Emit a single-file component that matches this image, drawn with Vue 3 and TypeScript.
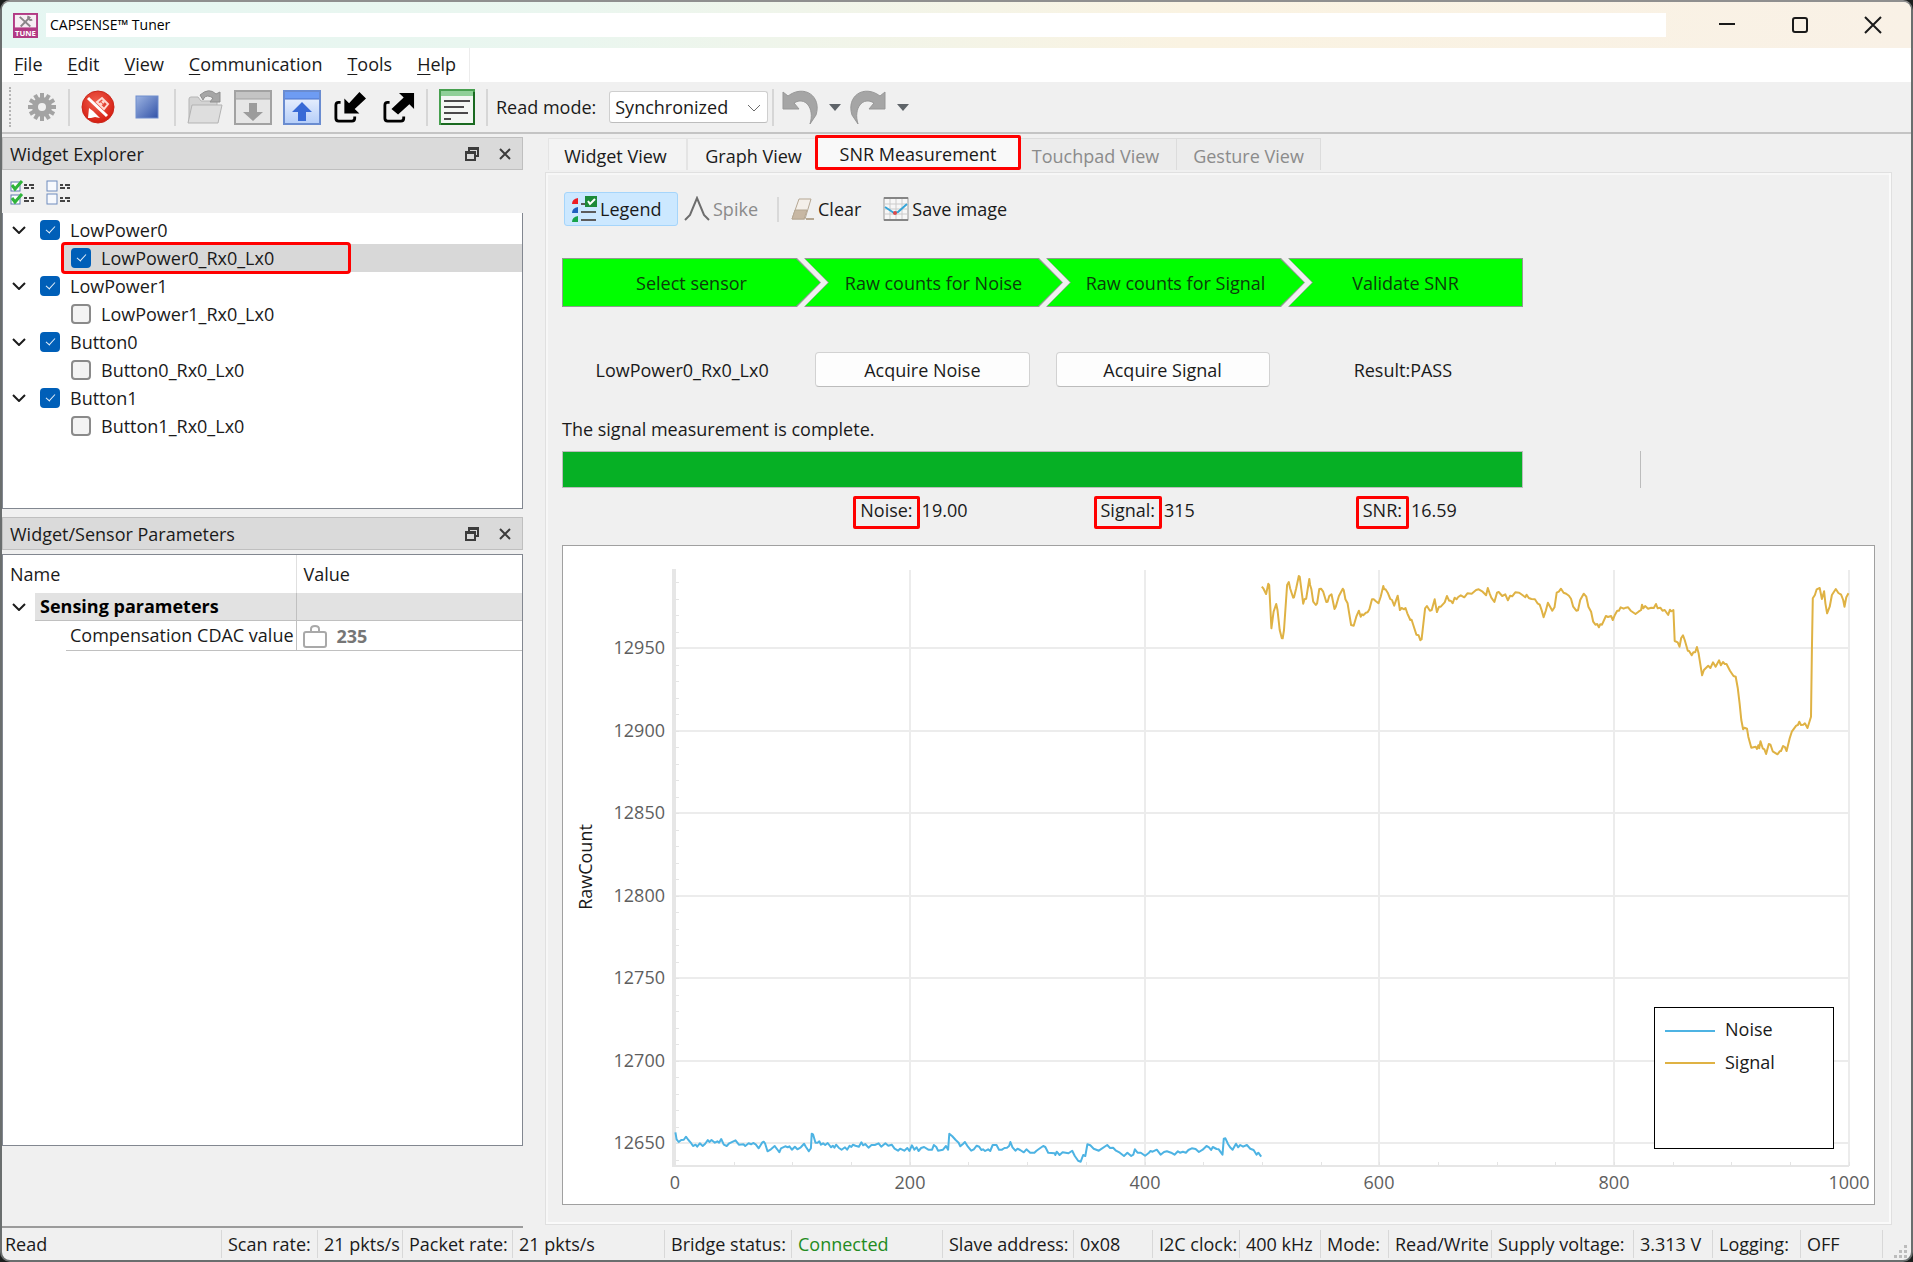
<script setup lang="ts">
import { ref } from 'vue'

interface Sensor { name: string; checked: boolean; selected?: boolean }
interface Widget { name: string; checked: boolean; sensors: Sensor[] }

const widgets = ref<Widget[]>([
  { name: 'LowPower0', checked: true, sensors: [{ name: 'LowPower0_Rx0_Lx0', checked: true, selected: true }] },
  { name: 'LowPower1', checked: true, sensors: [{ name: 'LowPower1_Rx0_Lx0', checked: false }] },
  { name: 'Button0', checked: true, sensors: [{ name: 'Button0_Rx0_Lx0', checked: false }] },
  { name: 'Button1', checked: true, sensors: [{ name: 'Button1_Rx0_Lx0', checked: false }] },
])

const menus = ['File', 'Edit', 'View', 'Communication', 'Tools', 'Help']
const steps = ['Select sensor', 'Raw counts for Noise', 'Raw counts for Signal', 'Validate SNR']
const readMode = ref('Synchronized')

const status: { text: string; width: number; ok?: boolean }[] = [
  { text: 'Read', width: 219 },
  { text: 'Scan rate:', width: 96 },
  { text: '21 pkts/s', width: 85 },
  { text: 'Packet rate:', width: 110 },
  { text: '21 pkts/s', width: 152 },
  { text: 'Bridge status:', width: 127 },
  { text: 'Connected', width: 151, ok: true },
  { text: 'Slave address:', width: 131 },
  { text: '0x08', width: 79 },
  { text: 'I2C clock:', width: 87 },
  { text: '400 kHz', width: 81 },
  { text: 'Mode:', width: 68 },
  { text: 'Read/Write', width: 103 },
  { text: 'Supply voltage:', width: 142 },
  { text: '3.313 V', width: 79 },
  { text: 'Logging:', width: 88 },
  { text: 'OFF', width: 82 },
]

// Plot geometry, in units of the chart's viewBox.
const plot = { left: 112, right: 1286, top: 24, bottom: 620, y0: 597, yStep: 82.5, xStep: 234.75 }
const yTicks = [12650, 12700, 12750, 12800, 12850, 12900, 12950].map((value, i) => ({
  value, y: Math.round(plot.y0 - i * plot.yStep),
}))
const xTicks = [0, 200, 400, 600, 800, 1000].map((value, i) => ({
  value, x: Math.round(plot.left + i * plot.xStep),
}))
const yMinor = Array.from({ length: 36 }, (_, i) => Math.round(plot.y0 + 16.5 - i * 16.5)).filter((y) => y > plot.top)
const xMinor = Array.from({ length: 20 }, (_, i) => Math.round(plot.left + (i + 1) * 58.69))

const trace = (points: string, x: number, y: number, sx: number, sy: number) =>
  points.split(' ').map((p) => {
    const [u, v] = p.split(',').map(Number)
    return `${(x + u / sx).toFixed(1)},${(y + v / sy).toFixed(1)}`
  }).join(' ')

const noise = trace('84,97 87,118 92,126 98,120 104,119 109,110 115,120 120,127 126,138 132,134 136,140 142,130 149,138 155,131 161,120 165,126 170,120 178,128 184,124 188,128 193,117 199,134 206,138 212,130 227,121 235,134 246,133 250,138 258,130 264,133 269,129 275,133 282,145 290,128 294,125 297,130 303,154 311,148 320,138 326,148 331,157 335,145 345,139 351,142 355,139 361,149 368,140 374,148 382,142 390,131 394,140 401,154 406,145 408,101 411,103 417,128 422,128 426,124 430,134 435,130 440,135 446,129 454,142 458,137 462,143 466,134 472,143 479,149 487,142 492,149 498,137 502,141 506,134 512,137 520,140 526,127 530,136 535,132 543,143 550,135 558,135 567,130 573,140 583,130 590,137 598,134 605,146 613,152 618,146 628,152 635,144 640,153 646,136 652,149 657,142 662,153 668,144 675,141 685,149 694,149 698,135 704,141 708,152 720,149 727,138 732,149 735,101 742,109 750,120 757,128 761,139 768,131 772,126 779,140 787,152 793,148 800,137 806,140 811,150 815,148 820,153 827,148 832,153 838,135 847,135 853,149 860,149 866,144 872,143 877,138 880,126 885,142 892,152 897,146 903,150 912,157 918,148 927,158 937,158 942,152 951,144 958,138 963,141 970,158 985,160 987,165 990,155 997,165 1004,157 1018,160 1027,152 1033,168 1041,182 1047,185 1053,165 1058,168 1063,133 1070,136 1078,146 1090,152 1110,135 1117,144 1124,143 1131,152 1140,158 1150,168 1158,158 1167,168 1172,164 1176,148 1182,158 1190,158 1200,167 1208,160 1213,153 1218,155 1228,149 1237,164 1245,156 1252,154 1262,158 1270,164 1278,154 1283,158 1290,155 1297,158 1303,150 1311,145 1320,147 1328,156 1337,149 1346,138 1352,142 1357,150 1361,141 1370,147 1375,148 1384,164 1387,116 1391,115 1397,132 1402,142 1408,149 1416,131 1421,142 1426,135 1433,140 1442,135 1450,146 1458,150 1465,164 1469,158 1476,170', 77, 554, 2.376, 3)
const signal = trace('73,110 77,116 83,132 88,101 90,105 95,235 100,185 106,162 109,180 114,240 119,265 121,265 124,240 131,105 135,96 138,115 145,143 147,142 152,115 158,78 160,80 166,140 168,161 171,148 175,146 182,87 184,105 187,118 191,155 197,165 200,160 205,117 209,116 214,125 221,156 224,155 228,138 233,133 240,177 243,170 250,138 259,116 261,120 265,148 270,160 273,185 278,225 284,227 290,200 296,182 300,200 303,193 306,196 312,188 316,187 320,178 326,148 330,148 335,154 341,160 346,140 352,108 354,118 357,118 362,128 368,147 372,150 377,167 385,137 390,180 394,174 400,178 403,174 407,190 414,210 417,209 428,254 433,256 437,271 440,268 444,220 448,175 452,168 459,182 463,180 470,148 475,186 480,170 484,170 493,157 498,138 503,152 507,152 511,160 516,143 520,148 524,141 530,136 538,142 545,130 555,131 565,120 571,118 580,125 588,136 592,114 596,130 600,143 607,156 613,128 617,126 625,138 632,133 638,151 643,137 648,139 655,127 664,128 672,136 678,142 681,134 686,144 692,147 700,148 706,160 711,164 716,182 720,202 725,182 730,158 735,170 740,182 745,172 750,128 755,125 760,116 766,128 772,131 778,137 783,146 788,170 795,182 799,181 804,150 812,131 818,140 823,170 829,185 834,215 839,224 843,222 847,232 850,223 854,224 863,198 868,201 875,198 879,210 884,194 889,182 893,182 897,172 904,176 909,173 914,172 920,182 931,192 938,185 944,180 946,164 949,175 953,168 960,176 967,173 973,174 978,162 982,175 988,173 993,182 998,180 1006,195 1010,179 1013,184 1018,180 1021,273 1028,277 1032,290 1036,264 1040,256 1044,270 1051,302 1054,303 1060,316 1064,307 1068,307 1072,291 1076,310 1084,376 1088,360 1098,347 1103,354 1109,337 1115,350 1123,331 1127,346 1132,336 1136,342 1140,342 1148,362 1156,378 1161,380 1166,415 1170,460 1174,510 1178,538 1181,533 1187,536 1190,560 1197,593 1207,590 1210,597 1213,586 1215,595 1218,574 1223,595 1227,598 1231,612 1237,582 1241,584 1246,604 1257,613 1262,604 1265,603 1270,588 1274,591 1278,603 1285,565 1290,545 1300,527 1304,525 1307,515 1311,525 1316,524 1320,520 1326,534 1334,500 1336,300 1338,145 1343,135 1347,118 1354,114 1359,147 1364,124 1367,160 1371,190 1377,170 1382,135 1391,117 1397,129 1403,134 1408,150 1411,170 1415,142 1420,130', 667, 4, 2.296, 3)

const gearTeeth = Array.from({ length: 12 }, (_, i) => i * 30)
</script>

<template>
  <div class="window">
    <header class="titlebar">
      <svg class="app-icon" viewBox="0 0 26 26" aria-hidden="true">
        <rect x="1" y="1" width="24" height="24" fill="#f7eef4" stroke="#b23a84" stroke-width="2" />
        <path d="M7 4l11 10M18 4L8 14" stroke="#8b8589" stroke-width="2" fill="none" />
        <path d="M16 3a3 3 0 0 0 4 4" stroke="#8b8589" stroke-width="2" fill="none" />
        <rect x="1" y="15" width="24" height="10" fill="#b23a84" />
        <text x="13" y="24" text-anchor="middle" class="app-icon-text">TUNE</text>
      </svg>
      <h1 class="caption">CAPSENSE™ Tuner</h1>
      <div class="window-controls">
        <button type="button" aria-label="Minimize"><svg viewBox="0 0 18 18"><path d="M1 8h16" /></svg></button>
        <button type="button" aria-label="Maximize"><svg viewBox="0 0 18 18"><rect x="2" y="2" width="14" height="14" rx="2" /></svg></button>
        <button type="button" aria-label="Close"><svg viewBox="0 0 18 18"><path d="M1 1l16 16M17 1L1 17" /></svg></button>
      </div>
    </header>

    <nav class="menubar">
      <button v-for="m in menus" :key="m" type="button"><u>{{ m[0] }}</u>{{ m.slice(1) }}</button>
      <span class="menu-end"></span>
    </nav>

    <div class="toolbar">
      <span class="handle"></span>
      <button type="button" class="tool gear" aria-label="Settings" disabled>
        <svg width="30" height="30" viewBox="-15 -15 30 30">
          <g fill="#a3a3a3">
            <rect v-for="a in gearTeeth" :key="a" x="-2" y="-14" width="4" height="6" :transform="`rotate(${a})`" />
            <path fill-rule="evenodd" d="M0-10a10 10 0 1 0 0 20a10 10 0 1 0 0-20zM0-4a4 4 0 1 1 0 8a4 4 0 1 1 0-8z" />
          </g>
        </svg>
      </button>
      <span class="sep"></span>
      <button type="button" class="tool disconnect" aria-label="Disconnect">
        <svg width="34" height="34" viewBox="0 0 34 34">
          <defs><radialGradient id="red" cx=".45" cy=".35" r=".7"><stop offset="0" stop-color="#f0604f" /><stop offset="1" stop-color="#d3170b" /></radialGradient></defs>
          <circle cx="17" cy="17" r="16" fill="url(#red)" stroke="#c9281c" />
          <path d="M7 28l1-10 4 3 7 7-5-1-4 1z" fill="#fff" />
          <path d="M16 12l5-4 6 6-4 5zM21 11l2 2M19 13l2 2" fill="none" stroke="#ffd9d2" stroke-width="2" />
          <path d="M7 8l19 18" stroke="#fff" stroke-width="3" />
        </svg>
      </button>
      <button type="button" class="tool stop" aria-label="Stop">
        <svg width="24" height="24" viewBox="0 0 24 24">
          <defs><linearGradient id="blue" x1="0" y1="0" x2="1" y2="1"><stop offset="0" stop-color="#9db4e2" /><stop offset="1" stop-color="#3253a8" /></linearGradient></defs>
          <rect x="1" y="1" width="22" height="22" fill="url(#blue)" stroke="#6f8dcd" />
        </svg>
      </button>
      <span class="sep"></span>
      <button type="button" class="tool open" aria-label="Open" disabled>
        <svg width="36" height="36" viewBox="0 0 36 36">
          <path d="M2 33V10q0-2 2-2h7l3 4h16v5" fill="#d3d3d3" stroke="#b5b5b5" />
          <path d="M1 34L5 16h30l-4 18z" fill="#dedede" stroke="#b3b3b3" />
          <path d="M13 6q9-8 16-1l4-2v10H23l3-4q-6-4-9 0l-1 2z" fill="#a6a6a6" stroke="#8f8f8f" />
        </svg>
      </button>
      <button type="button" class="tool window-tool" aria-label="Read from device" disabled>
        <svg width="38" height="35" viewBox="0 0 38 35">
          <rect x="1" y="1" width="36" height="33" fill="#e6e6e6" stroke="#a2a2a2" stroke-width="2" />
          <rect x="2" y="2" width="34" height="7" fill="#c4c4c4" />
          <path d="M2 9h34" stroke="#a2a2a2" />
          <path d="M15 13h8v9h6L19 31 9 22h6z" fill="#9c9c9c" />
        </svg>
      </button>
      <button type="button" class="tool window-tool" aria-label="Write to device">
        <svg width="38" height="35" viewBox="0 0 38 35">
          <defs><linearGradient id="pane" x1="0" y1="0" x2="0" y2="1"><stop offset="0" stop-color="#f4f8ff" /><stop offset="1" stop-color="#b4cdf8" /></linearGradient></defs>
          <rect x="1" y="1" width="36" height="33" fill="url(#pane)" stroke="#6a8cd0" stroke-width="2" />
          <rect x="2" y="2" width="34" height="7" fill="#6e9cf3" />
          <path d="M2 9h34" stroke="#4a73c9" />
          <path d="M15 31h8v-9h6L19 12 9 22h6z" fill="#386ad6" />
        </svg>
      </button>
      <button type="button" class="tool import" aria-label="Import">
        <svg width="32" height="34" viewBox="0 0 34 34">
          <path d="M7 12H5q-3 0-3 3v14q0 3 3 3h14q3 0 3-3v-2" fill="none" stroke="#000" stroke-width="3" />
          <path d="M11 24V8l5 5L27 1l7 7-12 11 5 5z" />
        </svg>
      </button>
      <button type="button" class="tool export" aria-label="Export">
        <svg width="32" height="34" viewBox="0 0 34 34">
          <path d="M7 12H5q-3 0-3 3v14q0 3 3 3h14q3 0 3-3v-2" fill="none" stroke="#000" stroke-width="3" />
          <path d="M33 2v17l-5-5-12 11-7-6 13-12-5-5z" />
        </svg>
      </button>
      <span class="sep"></span>
      <button type="button" class="tool log" aria-label="Log">
        <svg width="36" height="36" viewBox="0 0 36 36">
          <rect x="1" y="1" width="34" height="34" fill="#f3f7f3" stroke="#47a04f" stroke-width="2" />
          <path d="M35 3v32H2" fill="none" stroke="#1a6a20" stroke-width="2" />
          <rect x="2" y="2" width="32" height="5" fill="#8fd097" />
          <path d="M5 12h26M5 18h20M5 24h24M5 30h7" stroke="#4a4a4a" stroke-width="2" />
        </svg>
      </button>
      <span class="sep before-label"></span>
      <label class="read-label" for="read-mode">Read mode:</label>
      <span class="select">
        <select id="read-mode" v-model="readMode"><option>Synchronized</option></select>
        <svg width="14" height="8" viewBox="0 0 14 8" aria-hidden="true"><path d="M1 1l6 6 6-6" fill="none" stroke="#6b6b6b" /></svg>
      </span>
      <span class="sep tight"></span>
      <button type="button" class="tool undo" aria-label="Undo" disabled>
        <svg width="36" height="36" viewBox="0 0 36 36"><path d="M1 3l5 4C22-5 40 7 34 26l-6 9C33 19 23 7 12 14l5 6H1z" fill="#a5a5a5" stroke="#979797" /></svg>
      </button>
      <span class="caret"></span>
      <button type="button" class="tool redo" aria-label="Redo" disabled>
        <svg width="36" height="36" viewBox="0 0 36 36"><path d="M35 3l-5 4C14-5-4 7 2 26l6 9C3 19 13 7 24 14l-5 6h16z" fill="#a5a5a5" stroke="#979797" /></svg>
      </button>
      <span class="caret"></span>
    </div>

    <div class="body">
      <aside class="docks">
        <section class="dock">
          <header class="dock-title">
            <h2>Widget Explorer</h2>
            <button type="button" aria-label="Float"><svg width="14" height="14" viewBox="0 0 14 14"><path d="M4 4V1h9v8h-3M4 2h9" /><path d="M1 5h9v8H1zM1 6h9" /></svg></button>
            <button type="button" aria-label="Close panel"><svg width="12" height="12" viewBox="0 0 12 12"><path d="M1 1l10 10M11 1L1 11" /></svg></button>
          </header>
          <div class="explorer-tools">
            <button type="button" aria-label="Check all">
              <svg width="25" height="25" viewBox="0 0 25 25">
                <g v-for="y in [0, 13]" :key="y" :transform="`translate(0 ${y})`">
                  <rect x="1" y="2" width="9" height="9" fill="#fff" stroke="#5d79ad" />
                  <path d="M2 5l3 4 7-8" fill="none" stroke="#2fb53a" stroke-width="3" />
                  <path d="M14 5h3M19 5h5M14 8h5M21 8h3" stroke="#444" stroke-width="2" />
                </g>
              </svg>
            </button>
            <button type="button" aria-label="Uncheck all">
              <svg width="25" height="25" viewBox="0 0 25 25">
                <g v-for="y in [0, 13]" :key="y" :transform="`translate(0 ${y})`">
                  <rect x="1" y="1" width="10" height="10" fill="#f7f9fd" stroke="#6f8bbd" />
                  <path d="M14 5h3M19 5h5M14 8h5M21 8h3" stroke="#444" stroke-width="2" />
                </g>
              </svg>
            </button>
          </div>
          <ul class="tree">
            <li v-for="w in widgets" :key="w.name">
              <label class="row parent">
                <svg width="14" height="8" viewBox="0 0 14 8" aria-hidden="true"><path d="M1 1l6 6 6-6" fill="none" stroke="#1c1c1c" stroke-width="2" /></svg>
                <input v-model="w.checked" type="checkbox" /><span>{{ w.name }}</span>
              </label>
              <ul>
                <li v-for="s in w.sensors" :key="s.name" :class="{ selected: s.selected }">
                  <label class="row child" :class="{ marked: s.selected }">
                    <input v-model="s.checked" type="checkbox" /><span>{{ s.name }}</span>
                  </label>
                </li>
              </ul>
            </li>
          </ul>
        </section>

        <section class="dock params">
          <header class="dock-title">
            <h2>Widget/Sensor Parameters</h2>
            <button type="button" aria-label="Float"><svg width="14" height="14" viewBox="0 0 14 14"><path d="M4 4V1h9v8h-3M4 2h9" /><path d="M1 5h9v8H1zM1 6h9" /></svg></button>
            <button type="button" aria-label="Close panel"><svg width="12" height="12" viewBox="0 0 12 12"><path d="M1 1l10 10M11 1L1 11" /></svg></button>
          </header>
          <div class="grid-frame">
            <table>
              <thead><tr><th class="name" colspan="3">Name</th><th>Value</th></tr></thead>
              <tbody>
                <tr class="group">
                  <td class="toggle"><svg width="14" height="8" viewBox="0 0 14 8" aria-hidden="true"><path d="M1 1l6 6 6-6" fill="none" stroke="#1c1c1c" stroke-width="2" /></svg></td>
                  <th class="group-name" colspan="2">Sensing parameters</th>
                  <td class="fill"></td>
                </tr>
                <tr class="item">
                  <td class="toggle"></td>
                  <td class="indent"></td>
                  <td class="label">Compensation CDAC value</td>
                  <td class="value">
                    <svg width="24" height="24" viewBox="0 0 24 24" aria-hidden="true"><path d="M8 8V5q0-3 4-3t4 3v3" fill="none" stroke="#a9a9a9" stroke-width="2" /><rect x="1" y="8" width="22" height="15" rx="2" fill="#fff" stroke="#a9a9a9" stroke-width="2" /></svg>
                    <b>235</b>
                  </td>
                </tr>
              </tbody>
            </table>
          </div>
        </section>
      </aside>

      <main class="main">
        <div class="tabs" role="tablist">
          <button type="button" role="tab" class="t1">Widget View</button>
          <button type="button" role="tab" class="t2">Graph View</button>
          <button type="button" role="tab" class="t3" aria-selected="true">SNR Measurement</button>
          <button type="button" role="tab" class="t4" disabled>Touchpad View</button>
          <button type="button" role="tab" class="t5" disabled>Gesture View</button>
        </div>
        <section class="page">
          <div class="page-tools">
            <button type="button" class="legend-btn" aria-pressed="true">
              <svg width="26" height="26" viewBox="0 0 26 26" aria-hidden="true">
                <path d="M1 8q0-5 6-6v6z" fill="#ed1c24" /><path d="M1 17q0-5 6-6v6z" fill="#1f5fbf" /><path d="M1 26q0-5 6-6v6z" fill="#17a34a" />
                <path d="M10 8h4M10 16h15M10 24h15" stroke="#5c5c5c" stroke-width="2" />
                <rect x="14" y="0" width="12" height="11" fill="#1d8a38" /><path d="M17 5l2 3 5-5" fill="none" stroke="#fff" stroke-width="2" />
              </svg>Legend
            </button>
            <button type="button" class="spike-btn" disabled>
              <svg width="26" height="26" viewBox="0 0 26 26" aria-hidden="true"><path d="M1 24l5-5 7-17 7 17 5 5" fill="none" stroke="#6d6d6d" stroke-width="2" /></svg>Spike
            </button>
            <span class="sep small"></span>
            <button type="button" class="clear-btn">
              <svg width="25" height="24" viewBox="0 0 25 24" aria-hidden="true">
                <path d="M9 2h12l-6 20H2z" fill="#f4efe9" stroke="#b5a793" /><path d="M5 13h12l-3 9H2z" fill="#c7b7a3" stroke="#b5a793" /><path d="M16 22h8" stroke="#b5a793" stroke-width="2" />
              </svg>Clear
            </button>
            <button type="button" class="save-btn">
              <svg width="26" height="24" viewBox="0 0 26 24" aria-hidden="true">
                <rect x="1" y="1" width="24" height="22" fill="#f7f7f7" stroke="#9a9a9a" />
                <path d="M7 2v20M13 2v20M19 2v20M2 7h22M2 12h22M2 17h22" stroke="#cbcbcb" />
                <path d="M1 1h24M1 23h24" stroke="#858585" stroke-width="2" />
                <path d="M2 10l9 6 4-1 9-8" fill="none" stroke="#36a5d8" stroke-width="2" /><circle cx="12" cy="16" r="2" fill="#dc4a4a" />
              </svg>Save image
            </button>
          </div>

          <ol class="steps"><li v-for="s in steps" :key="s"><span>{{ s }}</span></li></ol>

          <div class="columns actions">
            <span>LowPower0_Rx0_Lx0</span>
            <button type="button">Acquire Noise</button>
            <button type="button">Acquire Signal</button>
            <span>Result:PASS</span>
          </div>

          <p class="message">The signal measurement is complete.</p>
          <div class="progress-row">
            <div class="progress" role="progressbar" aria-valuenow="100" aria-label="Measurement progress"></div>
            <span class="progress-end"></span>
          </div>

          <div class="columns results">
            <span></span>
            <span><em>Noise:</em>19.00</span>
            <span><em>Signal:</em>315</span>
            <span class="snr"><em>SNR:</em>16.59</span>
          </div>

          <div class="chart">
            <svg viewBox="0 0 1311 658">
              <g class="grid">
                <path v-for="t in xTicks.slice(1)" :key="'x' + t.value" :d="`M${t.x} ${plot.top}V${plot.bottom}`" />
                <path v-for="t in yTicks" :key="'y' + t.value" :d="`M${plot.left} ${t.y}H${plot.right}`" />
              </g>
              <g class="minor">
                <path v-for="y in yMinor" :key="'ym' + y" :d="`M${plot.left} ${y}h4`" />
                <path v-for="x in xMinor" :key="'xm' + x" :d="`M${x} ${plot.bottom}v-4`" />
              </g>
              <path class="axis-y" :d="`M111 ${plot.top - 1}V${plot.bottom}`" />
              <path class="axis-x" :d="`M109 ${plot.bottom}H${plot.right}`" />
              <g class="tick">
                <text v-for="t in yTicks" :key="'yl' + t.value" x="102" :y="t.y + 6" text-anchor="end">{{ t.value }}</text>
                <text v-for="t in xTicks" :key="'xl' + t.value" :x="t.x" y="643" text-anchor="middle">{{ t.value }}</text>
              </g>
              <text class="axis-title" transform="translate(29 321) rotate(-90)" text-anchor="middle">RawCount</text>
              <polyline class="noise" :points="noise" />
              <polyline class="signal" :points="signal" />
              <rect class="legend-box" x="1091" y="461" width="179" height="141" />
              <path class="noise" d="M1102 485h50" />
              <path class="signal" d="M1102 517h50" />
              <text class="legend-text" x="1162" y="490">Noise</text>
              <text class="legend-text" x="1162" y="523">Signal</text>
            </svg>
          </div>
        </section>
      </main>
    </div>

    <footer class="statusbar">
      <span v-for="(s, i) in status" :key="i" :class="{ ok: s.ok }" :style="{ flexBasis: s.width + 'px' }">{{ s.text }}</span>
      <span class="grip"><svg width="13" height="13" viewBox="0 0 13 13" aria-hidden="true"><path d="M10 0h3v3h-3zM5 5h3v3H5zM10 5h3v3h-3zM0 10h3v3H0zM5 10h3v3H5zM10 10h3v3h-3z" fill="#bcbcbc" /></svg></span>
    </footer>
  </div>
</template>

<style>
body { background: #1b1e1d; }
</style>

<style scoped>
* { box-sizing: border-box; }
.window {
  display: flex; flex-direction: column; min-height: 100vh;
  border: 2px solid #6a6e6e; border-top-color: #8f8f8f; border-radius: 10px; overflow: hidden;
  background: #f0f0f0; color: #1a1a1a;
  font: 18px/24px "Open Sans", "Noto Sans", sans-serif;
}
button, select { font: inherit; color: inherit; }
button { padding: 0; border: 0; background: none; }
svg { display: block; flex: none; }
h1, h2, p, ul, ol { margin: 0; padding: 0; list-style: none; font-weight: 400; }

.titlebar { display: flex; align-items: center; height: 46px; padding-left: 11px; background: linear-gradient(90deg, #e5f6f2, #eaf6ef 30%, #faf3e2 62%, #f9f1e6); }
.app-icon { width: 25px; height: 25px; }
.app-icon-text { font-size: 8px; font-weight: 700; fill: #fff; }
.caption { flex: 1; margin-left: 8px; padding-left: 4px; background: #fff; font-size: 14px; font-weight: 400; color: #000; }
.window-controls { display: flex; width: 245px; padding-left: 52px; gap: 55px; }
.window-controls svg { width: 18px; height: 18px; fill: none; stroke: #1a1a1a; stroke-width: 2; }

.menubar { display: flex; gap: 25px; height: 34px; padding-left: 12px; background: #fff; }
.menubar button { padding-bottom: 2px; }
.menubar u { text-underline-offset: 3px; text-decoration-thickness: 1px; }
.menu-end { width: 1px; margin-left: -12px; background: #ececec; }

.toolbar { display: flex; align-items: center; height: 52px; padding-left: 7px; border-bottom: 2px solid #c4c4c4; }
.handle { width: 3px; height: 40px; border-left: 2px dotted #b4b4b4; }
.sep { width: 2px; height: 37px; margin: 0 11px; background: #d6d6d6; }
.sep.before-label { margin-right: 8px; }
.sep.tight { margin: 0 8px 0 4px; }
.gear { margin-left: 15px; }
.stop { margin: 0 4px 0 20px; }
.window-tool { margin-left: 11px; }
.import { margin-left: 13px; }
.export { margin-left: 17px; }
.read-label { margin-right: 13px; }
.select { position: relative; width: 159px; }
.select select { width: 100%; height: 32px; padding: 0 5px; border: 1px solid #cfcfcf; border-bottom-color: #bdbdbd; border-radius: 3px; background: #fff; appearance: none; }
.select svg { position: absolute; right: 7px; top: 13px; pointer-events: none; }
.caret { margin: 0 9px 0 11px; border: 6px solid transparent; border-top: 7px solid #5f6469; border-bottom: 0; }

.body { display: flex; flex: 1; padding-top: 1px; }
.docks { display: flex; flex-direction: column; width: 521px; padding: 2px 0; }
.dock-title { display: flex; align-items: center; height: 33px; padding: 0 11px 0 7px; border: 1px solid #bfbfbf; background: #dadada; }
.dock-title h2 { flex: 1; font-size: 18px; }
.dock-title button { margin-left: 20px; }
.dock-title svg { fill: none; stroke: #3c3c3c; stroke-width: 2; }
.explorer-tools { display: flex; gap: 11px; padding: 10px 8px 8px; }
.tree { height: 296px; padding-top: 3px; border: 1px solid #828790; border-top: 0; background: #fff; }
.tree ul { padding: 0; }
.row { display: flex; align-items: center; height: 28px; }
.parent { padding-left: 9px; }
.parent input { margin: 0 10px 0 14px; }
.child { padding-left: 68px; }
.child input { margin: 0 10px 0 0; }
.selected { background: linear-gradient(90deg, #fff 60px, #d8d8d8 60px); }
.marked { width: 286px; height: 28px; margin-left: 60px; padding-left: 8px; border-radius: 2px; outline: 3px solid #f00; outline-offset: -1px; }
input[type="checkbox"] { position: relative; width: 20px; height: 20px; border: 2px solid #8a8a8a; border-radius: 4px; background: #f3f3f3; appearance: none; }
input[type="checkbox"]:checked { border-color: #005fb8; background: #005fb8; }
input[type="checkbox"]:checked::after { content: ""; position: absolute; left: 6px; top: 2px; width: 4px; height: 8px; border: solid #e6f0fa; border-width: 0 1px 1px 0; transform: rotate(42deg); }

.params { display: flex; flex: 1; flex-direction: column; margin-top: 8px; border-bottom: 2px solid #9b9b9b; }
.grid-frame { flex: 1; margin: 4px 0 80px; border: 1px solid #828790; background: #fff; }
table { width: 100%; border-collapse: collapse; table-layout: auto; }
th, td { padding: 0; text-align: left; font-weight: 400; white-space: nowrap; }
thead th { height: 38px; padding-left: 7px; }
th.name { border-right: 1px solid #e0e0e0; }
.toggle { width: 32px; padding-left: 9px; }
.indent { width: 31px; }
.group th, .group .fill { height: 27px; border-bottom: 1px solid #c0c0c0; background: #e2e2e2; }
.group th { padding-left: 5px; border-right: 1px solid #c0c0c0; font-weight: 700; color: #000; }
.item td { height: 30px; }
.item .label, .item .value { border-bottom: 1px solid #c0c0c0; }
.item .label { width: 230px; padding-left: 4px; border-right: 1px solid #c0c0c0; }
.item .value { padding-left: 6px; color: #767676; }
.value svg, .value b { display: inline-block; vertical-align: middle; }
.value b { margin-left: 10px; }

.main { display: flex; flex: 1; flex-direction: column; min-width: 0; padding: 0 19px 5px 22px; }
.tabs { display: flex; align-items: flex-end; height: 35px; margin-bottom: 2px; padding-left: 3px; }
.tabs button { height: 32px; padding-top: 2px; border: 1px solid #e4e4e4; border-bottom: 0; background: #f3f3f3; text-align: center; }
.tabs button:disabled { background: #ececec; border-color: #dcdcdc; color: #8b8b8b; }
.tabs .t1 { width: 139px; padding-right: 4px; }
.tabs .t2 { width: 128px; padding-left: 4px; border-right: 0; }
.tabs .t3 { width: 206px; height: 35px; border: 3px solid #f00; border-radius: 2px; background: #f9f9f9; }
.tabs .t4 { width: 156px; padding-right: 6px; border-left: 0; }
.tabs .t5 { width: 144px; border-left: 0; }
.page { flex: 1; padding: 19px 16px 16px; border: 1px solid #e0e0e0; box-shadow: inset -2px -2px #fafafa, inset 2px 2px #f7f7f7; }
.page-tools { display: flex; align-items: center; height: 34px; margin-left: 2px; }
.page-tools button { display: flex; align-items: center; height: 34px; }
.page-tools .legend-btn { width: 114px; padding-left: 6px; gap: 3px; border: 1px solid #a5d5fb; border-radius: 3px; background: #cce8ff; }
.spike-btn { gap: 3px; margin-left: 6px; }
.spike-btn:disabled { color: #8b8b8b; }
.sep.small { height: 25px; margin: 0 11px 0 19px; background: #d9d9d9; }
.clear-btn { gap: 3px; }
.save-btn { gap: 3px; margin-left: 22px; }

.steps { display: flex; max-width: 961px; height: 49px; margin-top: 32px; color: #0b3d0b; }
.steps li { position: relative; display: flex; flex: 259 0 0; align-items: center; justify-content: center; background: #8f9b8f; }
.steps li + li { margin-left: -17px; }
.steps li::before { content: ""; position: absolute; inset: 1px; background: #0f0; }
.steps span { position: relative; }
.steps li, .steps li::before { clip-path: polygon(0 0, calc(100% - 24px) 0, 100% 50%, calc(100% - 24px) 100%, 0 100%, 24px 50%); }
.steps li:first-child, .steps li:first-child::before { clip-path: polygon(0 0, calc(100% - 24px) 0, 100% 50%, calc(100% - 24px) 100%, 0 100%); }
.steps li:last-child { flex-grow: 235; }
.steps li:last-child, .steps li:last-child::before { clip-path: polygon(0 0, 100% 0, 100% 100%, 0 100%, 24px 50%); }

.columns { display: grid; grid-template-columns: repeat(4, 1fr); max-width: 961px; align-items: center; }
.actions { margin-top: 45px; text-align: center; }
.actions button { height: 35px; margin: 0 13px; border: 1px solid #d2d2d2; border-bottom-color: #bcbcbc; border-radius: 4px; background: #fdfdfd; }
.message { margin-top: 30px; }
.progress-row { display: flex; margin-top: 10px; height: 37px; }
.progress { width: 961px; border: 1px solid #bcbcbc; background: #06b025; }
.progress-end { width: 118px; border-right: 1px solid #bcbcbc; }
.results { margin-top: 8px; }
.results span { display: flex; padding-left: 51px; line-height: 28px; }
.results .snr { padding-left: 73px; }
.results em { height: 33px; margin-right: 2px; padding: 0 4px; border: 3px solid #f00; border-radius: 2px; font-style: normal; line-height: 22px; }

.chart { margin-top: 16px; border: 1px solid #a0a0a0; background: #fff; }
.chart svg { width: 100%; height: auto; }
.grid path { stroke: #ececec; stroke-width: 2; fill: none; shape-rendering: crispEdges; }
.minor path { stroke: #e4e4e4; stroke-width: 1; fill: none; shape-rendering: crispEdges; }
.axis-y { stroke: #e6e6e6; stroke-width: 4; }
.axis-x { stroke: #e6e6e6; stroke-width: 2; }
.tick text { font-size: 18px; fill: #5e5e5e; }
.axis-title, .legend-text { font-size: 18px; fill: #1a1a1a; }
.noise, .signal { fill: none; stroke-width: 2; stroke-linejoin: round; }
.noise { stroke: #4db3e3; }
.signal { stroke: #dfb244; }
.legend-box { fill: #fff; stroke: #000; shape-rendering: crispEdges; }

.statusbar { display: flex; height: 30px; padding-bottom: 2px; }
.statusbar span { flex: 0 1 auto; padding-left: 6px; border-left: 1px solid #d8d8d8; white-space: nowrap; line-height: 28px; }
.statusbar span:first-child { padding-left: 3px; border-left: 0; }
.statusbar .ok { color: #228b22; }
.statusbar .grip { flex: 1; display: flex; align-items: flex-end; padding-left: 11px; }
</style>
